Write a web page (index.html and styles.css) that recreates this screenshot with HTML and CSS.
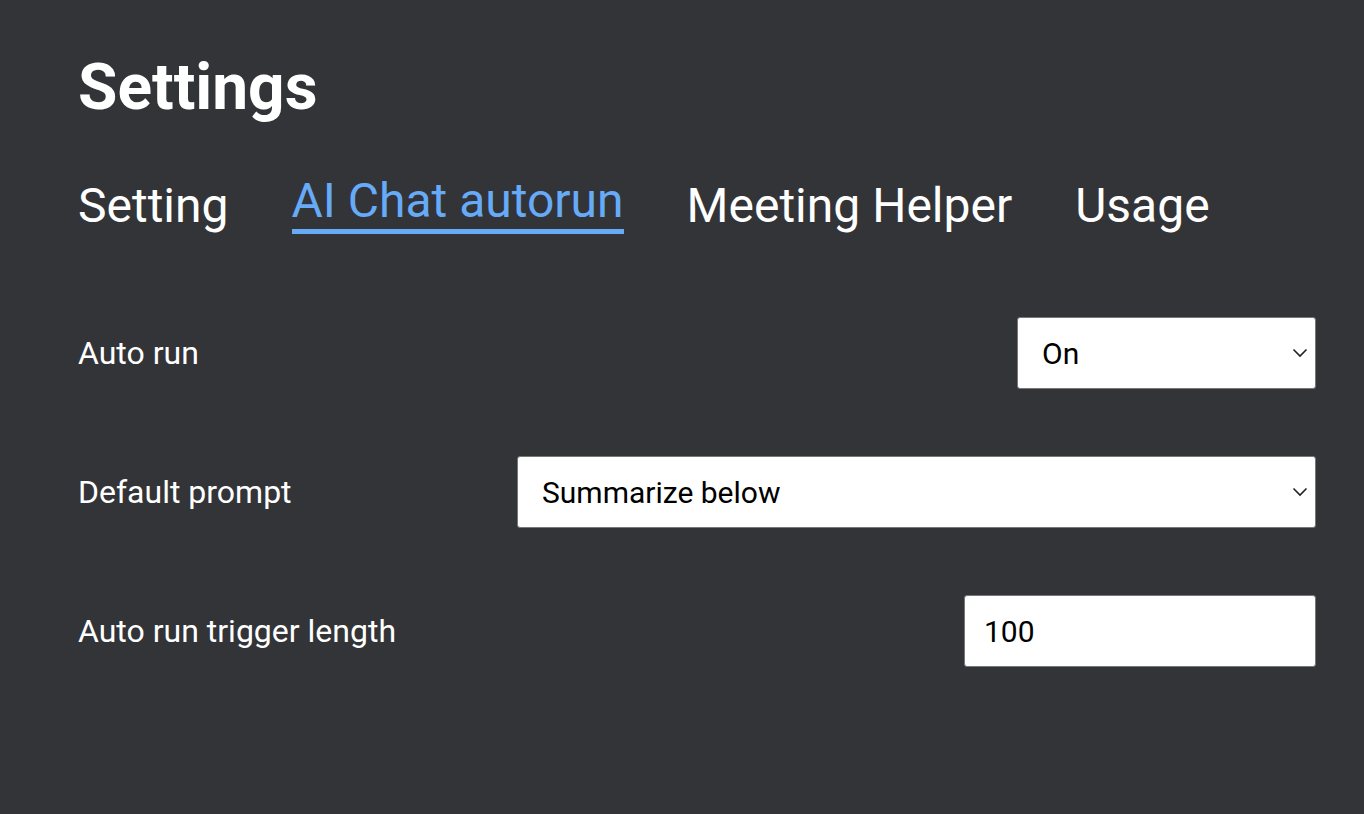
FILE: index.html
```html
<!DOCTYPE html>
<html lang="en">

<head>
    <meta charset="UTF-8">
    <meta name="viewport" content="width=device-width, initial-scale=1.0">
    <link rel="stylesheet" href="styles.css">
    <title>Settings</title>
</head>

<body>
    <div class="page">
        <h1>Settings</h1>

        <nav class="tabs">
            <a href="#" class="tab">Setting</a>
            <a href="#" class="tab active">AI Chat autorun</a>
            <a href="#" class="tab">Meeting Helper</a>
            <a href="#" class="tab">Usage</a>
        </nav>

        <div class="rows">
            <div class="row">
                <label for="autoRun">Auto run</label>
                <div class="select-wrap small">
                    <select id="autoRun">
                        <option>On</option>
                        <option>Off</option>
                    </select>
                    <svg class="chevron" width="16" height="10" viewBox="0 0 16 10">
                        <path d="M1.5 1.5 L8 8 L14.5 1.5" fill="none" stroke="#222" stroke-width="1.6"/>
                    </svg>
                </div>
            </div>

            <div class="row">
                <label for="defaultPrompt">Default prompt</label>
                <div class="select-wrap wide">
                    <select id="defaultPrompt">
                        <option>Summarize below</option>
                    </select>
                    <svg class="chevron" width="16" height="10" viewBox="0 0 16 10">
                        <path d="M1.5 1.5 L8 8 L14.5 1.5" fill="none" stroke="#222" stroke-width="1.6"/>
                    </svg>
                </div>
            </div>

            <div class="row">
                <label for="triggerLength">Auto run trigger length</label>
                <input type="text" id="triggerLength" value="100">
            </div>
        </div>
    </div>
</body>

</html>
```

FILE: styles.css
```css
body {
    font-family: 'Roboto', 'Liberation Sans', sans-serif;
    margin: 0;
    padding: 0;
    background: #333437;
    color: #fff;
}

.page {
    padding: 50px 48px 0 78px;
}

h1 {
    margin: 0;
    font-size: 64px;
    font-weight: 700;
}

.tabs {
    display: flex;
    align-items: flex-end;
    gap: 63px;
    margin-top: 47px;
}

.tab {
    color: #fff;
    font-size: 48px;
    text-decoration: none;
}

.tab.active {
    color: #66aaf8;
    border-bottom: 5px solid #66aaf8;
}

.rows {
    margin-top: 83px;
    display: flex;
    flex-direction: column;
    gap: 67px;
}

.row {
    display: flex;
    justify-content: space-between;
    align-items: center;
    height: 72px;
}

.row label {
    font-size: 32px;
}

.select-wrap {
    position: relative;
    height: 72px;
}

.select-wrap.small {
    width: 299px;
}

.select-wrap.wide {
    width: 799px;
}

select,
input[type="text"] {
    box-sizing: border-box;
    width: 100%;
    height: 72px;
    margin: 0;
    border: 1px solid #777;
    border-radius: 3px;
    background: #fff;
    color: #000;
    font-family: 'Roboto', 'Liberation Sans', sans-serif;
    font-size: 30px;
    outline: none;
}

select {
    appearance: none;
    -webkit-appearance: none;
    padding: 0 40px 0 24px;
}

input[type="text"] {
    width: 352px;
    padding: 0 19px;
}

.chevron {
    position: absolute;
    right: 8px;
    top: 31px;
    pointer-events: none;
}
```
